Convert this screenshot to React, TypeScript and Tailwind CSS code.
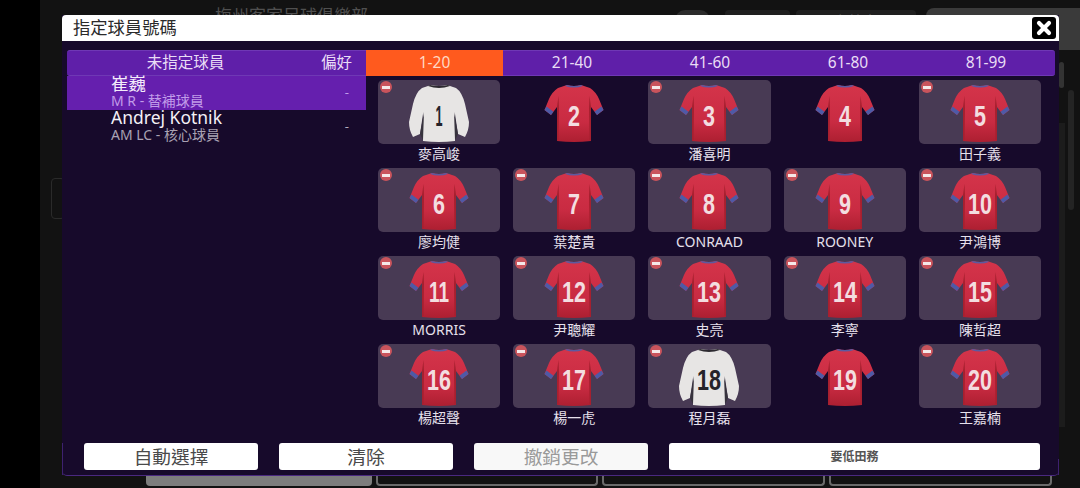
import React from 'react';
import { X } from 'lucide-react';

type Player = { no: number; name?: string; gk?: boolean };

const players: Player[] = [
  { no: 1, name: '麥高峻', gk: true },
  { no: 2 },
  { no: 3, name: '潘喜明' },
  { no: 4 },
  { no: 5, name: '田子義' },
  { no: 6, name: '廖均健' },
  { no: 7, name: '葉楚貴' },
  { no: 8, name: 'CONRAAD' },
  { no: 9, name: 'ROONEY' },
  { no: 10, name: '尹鴻博' },
  { no: 11, name: 'MORRIS' },
  { no: 12, name: '尹聰耀' },
  { no: 13, name: '史亮' },
  { no: 14, name: '李寧' },
  { no: 15, name: '陳哲超' },
  { no: 16, name: '楊超聲' },
  { no: 17, name: '楊一虎' },
  { no: 18, name: '程月磊', gk: true },
  { no: 19 },
  { no: 20, name: '王嘉楠' },
];

const ranges = ['1-20', '21-40', '41-60', '61-80', '81-99'];
const cjk = "font-['Noto_Sans','Noto_Sans_CJK_TC',sans-serif]";

const numberWidth = (no: number) => {
  if (no === 1) return 7;
  if (no === 11) return 20;
  return no > 9 ? 24 : 12;
};

const Jersey = ({ no, gk }: { no: number; gk?: boolean }) => {
  if (gk) {
    return (
      <svg viewBox="0 0 60 60" className="w-[60px] h-[60px]">
        <path d="M14 24 L46 24 L47 54 L13 54 Z" fill="#2b2733" />
        <path d="M22 1 Q30 3 38 1 L47 4 Q53 8 56 20 L60 38 Q60 46 56 53 L49 50 L46 30 L46 57 Q30 59 14 57 L14 30 L11 50 L4 53 Q0 46 0 38 L4 20 Q7 8 13 4 Z" fill="#e7e5e4" />
        <path d="M21 1 Q30 3 39 1 L41 2 Q30 6 19 2 Z" fill="#2d2a30" />
        <path d="M15 28 L14 56 L11 50 Z M45 28 L46 56 L49 50 Z" fill="#37333d" />
        <text x="30" y="42" textAnchor="middle" textLength={numberWidth(no)} lengthAdjust="spacingAndGlyphs" fontFamily="'Liberation Sans'" fontWeight="700" fontSize="30" fill="#26232a">{no}</text>
      </svg>
    );
  }
  const shade = `shirt-${no}`;
  return (
    <svg viewBox="0 0 60 60" className="w-[60px] h-[60px]">
      <defs>
        <linearGradient id={shade} x1="0" y1="0" x2="0" y2="1">
          <stop offset="0" stopColor="#d4344a" />
          <stop offset="0.65" stopColor="#c92b42" />
          <stop offset="1" stopColor="#ad1f31" />
        </linearGradient>
      </defs>
      <path d="M23 1 Q30 3 37 1 L46 4 Q52 8 55 15 L59.5 26 L53 31 L47 23 L47 57 Q30 59 13 57 L13 23 L7 31 L0.5 26 L5 15 Q8 8 14 4 Z" fill={`url(#${shade})`} />
      <path d="M0.5 26 L7 31 L9.5 27.8 L2.5 22.5 Z M59.5 26 L53 31 L50.5 27.8 L57.5 22.5 Z" fill="#4e5aa6" />
      <path d="M13 23 L14.5 12 L15 24 L14.5 56 L13 57 Z M47 23 L45.5 12 L45 24 L45.5 56 L47 57 Z" fill="#a6202f" />
      <path d="M23 1 Q30 3 37 1 L39 2 Q30 5 21 2 Z" fill="#5b5aa0" />
      <text x="30" y="42" textAnchor="middle" textLength={numberWidth(no)} lengthAdjust="spacingAndGlyphs" fontFamily="'Liberation Sans'" fontWeight="700" fontSize="30" fill="#f3dde0">{no}</text>
    </svg>
  );
};

const Cell = ({ player }: { player: Player }) => (
  <div className="h-[88px] flex flex-col">
    <div className={`relative h-[64px] rounded-[5px] flex items-end justify-center ${player.name ? 'bg-[#483a54]' : ''}`}>
      {player.name && (
        <span className="absolute left-[2px] top-[1px] w-[12px] h-[12px] rounded-full bg-[#c9545c] flex items-center justify-center">
          <span className="w-[8px] h-[3px] bg-[#f5e8e8]" />
        </span>
      )}
      <Jersey no={player.no} gk={player.gk} />
    </div>
    {player.name && (
      <div className={`${cjk} text-[14px] leading-[20px] text-center text-[#e6e0ec]`}>{player.name}</div>
    )}
  </div>
);

const App = () => {
  return (
    <div className={`relative w-[1080px] h-[488px] overflow-hidden bg-black flex ${cjk}`}>
      {/* Page behind the dialog */}
      <div className="ml-[40px] flex-1 bg-[#121212] flex flex-col justify-between">
        <div className="h-[50px] flex items-start">
          <div className="ml-[175px] mt-[6px] text-[17px] leading-[20px] text-[#505050]">梅州客家足球俱樂部</div>
          <div className="ml-auto mt-[10px] w-[35px] h-[20px] rounded-full bg-[#2b2b2b]" />
          <div className="ml-[15px] mt-[10px] w-[65px] h-[20px] rounded bg-[#1f1f1f]" />
          <div className="ml-[6px] mt-[10px] w-[120px] h-[20px] rounded bg-[#1f1f1f] text-[14px] text-center text-[#555555]">友誼賽</div>
          <div className="ml-[10px] mt-[8px] w-[154px] h-[42px] rounded-l-lg bg-[#3a3a3a]" />
        </div>
        <div className="h-[12px] flex gap-[4px] ml-[106px]">
          <div className="w-[226px] h-[10px] rounded-b bg-[#7d7d7d]" />
          <div className="w-[222px] h-[10px] rounded-b border-2 border-t-0 border-[#6a6a6a]" />
          <div className="w-[223px] h-[10px] rounded-b border-2 border-t-0 border-[#6a6a6a]" />
          <div className="w-[223px] h-[10px] rounded-b border-2 border-t-0 border-[#6a6a6a]" />
        </div>
      </div>

      {/* Edge details of the page behind */}
      <div className="absolute left-[51px] top-[178px] w-[14px] h-[41px] rounded border border-[#2a2a2a]" />
      <div className="absolute left-[1059px] top-[62px] w-[5px] h-[26px] rounded bg-[#333333]" />
      <div className="absolute left-[1059px] top-[123px] w-[6px] h-[304px] bg-[#1c1c1c]" />
      <div className="absolute left-[1068px] top-[90px] w-[6px] h-[120px] rounded bg-[#242424]" />

      {/* Dialog */}
      <div className="absolute left-[62px] top-[15px] w-[997px] h-[461px] flex flex-col rounded-b-[5px] border-b border-[#4a2880] bg-[#170a2b]">
        <span className="absolute left-0 bottom-0 w-px h-[32px] bg-[#3e2170]" />
        <span className="absolute right-0 bottom-0 w-px h-[16px] bg-[#3e2170]" />

        <div className="h-[26px] shrink-0 bg-white rounded-t-[4px] flex items-center justify-between pl-[11px] pr-[3px]">
          <span className="text-[17.3px] leading-none text-[#2a2a2a]">指定球員號碼</span>
          <span className="w-[24px] h-[22px] rounded-[3px] bg-black flex items-center justify-center">
            <X className="w-[20px] h-[20px] text-white" strokeWidth={5} />
          </span>
        </div>

        <div className="mt-[9px] ml-[5px] w-[988px] h-[26px] shrink-0 flex rounded-[3px] bg-[#5f1fa9] border-y border-[#6f38b5] text-[#e9dcf5]">
          <div className="w-[299px] flex items-center">
            <span className="w-[237px] text-center text-[15.5px]">未指定球員</span>
            <span className="ml-[17px] text-[15.5px]">偏好</span>
          </div>
          <div className="w-[137px] -my-px flex items-center justify-center bg-[#ff5a1e] text-[15.5px] text-[#ffd9c4]">{ranges[0]}</div>
          {ranges.slice(1).map((r) => (
            <div key={r} className="flex-1 flex items-center justify-center text-[15.5px]">{r}</div>
          ))}
        </div>

        <div className="flex-1 flex ml-[5px]">
          <div className="w-[299px]">
            <div className="h-[34px] bg-[#651fae] flex items-center">
              <div className="ml-[44px] flex-1 -mt-[2px]">
                <div className="text-[17.5px] leading-[17px] text-[#f3ebfa]">崔巍</div>
                <div className="text-[14px] leading-[17px] text-[#c19be9]">M R - 替補球員</div>
              </div>
              <span className="mr-[17px] text-[13px] text-[#c19be9]">-</span>
            </div>
            <div className="h-[34px] flex items-center">
              <div className="ml-[44px] flex-1 -mt-[2px]">
                <div className="text-[17.5px] leading-[17px] text-[#f3f0f6]">Andrej Kotnik</div>
                <div className="text-[14px] leading-[17px] text-[#a9a2b3]">AM LC - 核心球員</div>
              </div>
              <span className="mr-[17px] text-[13px] text-[#b4aebc]">-</span>
            </div>
          </div>
          <div className="ml-[12px] w-[663px] pt-[4px] grid grid-cols-5 gap-x-[13px] content-start">
            {players.map((p) => (
              <Cell key={p.no} player={p} />
            ))}
          </div>
        </div>

        <div className="h-[27px] mb-[5px] ml-[22px] shrink-0 flex gap-[21px] text-[18.7px]">
          <button className="w-[174px] rounded-[3px] bg-white text-[#4a4a4a]">自動選擇</button>
          <button className="w-[174px] rounded-[3px] bg-white text-[#4a4a4a]">清除</button>
          <button className="w-[174px] rounded-[3px] bg-[#f8f8f8] text-[#9a9a9a]">撤銷更改</button>
          <button className="w-[371px] rounded-[3px] bg-white text-[12px] font-bold text-[#555555]">要低田務</button>
        </div>
      </div>
    </div>
  );
};

export default App;
